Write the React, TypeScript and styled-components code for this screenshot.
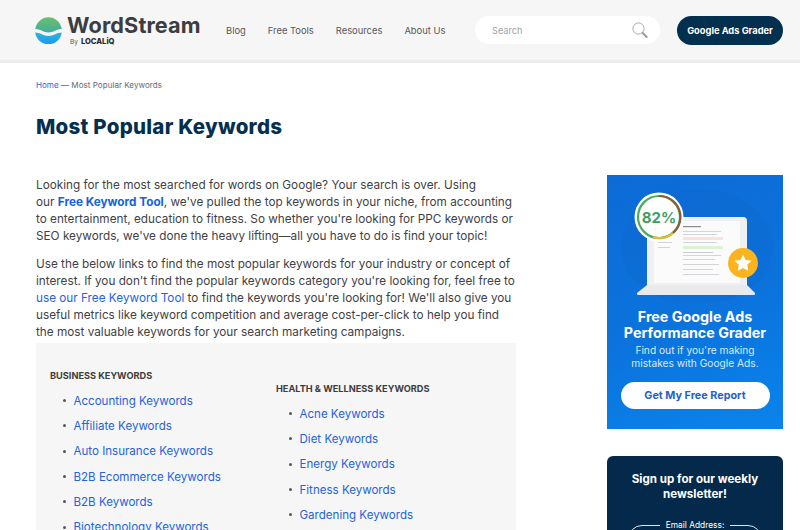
import styled, { createGlobalStyle } from "styled-components";

const GlobalStyle = createGlobalStyle`
  html, body {
    margin: 0;
    padding: 0;
    height: 530px;
    overflow: hidden;
    background: #fff;
    font-family: "Inter", "Liberation Sans", sans-serif;
  }
  * { box-sizing: border-box; }
`;

const Page = styled.div`
  width: 800px;
  height: 530px;
  overflow: hidden;
`;

const Header = styled.header`
  height: 63px;
  display: flex;
  align-items: center;
  padding: 0 17px 0 35px;
  background: #f6f6f7;
  border-bottom: 3px solid #ececec;
`;

const Logo = styled.div`
  display: flex;
  align-items: center;
  gap: 5px;
  width: 191px;
`;

const LogoWords = styled.div`
  display: flex;
  flex-direction: column;
`;

const LogoName = styled.span`
  font-size: 21.7px;
  line-height: 23px;
  font-weight: 700;
  color: #3c3d40;
  letter-spacing: 0.1px;
`;

const LogoBy = styled.span`
  font-size: 6.5px;
  line-height: 9px;
  margin-left: 3px;
  color: #55565a;
  b {
    font-size: 7.6px;
    font-weight: 800;
    color: #2b2c2f;
    margin-left: 3px;
  }
`;

const Nav = styled.nav`
  display: flex;
  gap: 22px;
  width: 249px;
`;

const NavLink = styled.a`
  font-size: 9.4px;
  color: #55565a;
  white-space: nowrap;
`;

const SearchBox = styled.div`
  width: 185px;
  height: 28px;
  border-radius: 14px;
  background: #fff;
  display: flex;
  align-items: center;
  justify-content: space-between;
  padding: 0 12px 0 17px;
  font-size: 9.2px;
  color: #a2a3a7;
`;

const GraderButton = styled.a`
  margin-left: 17px;
  width: 106px;
  height: 29px;
  border-radius: 15px;
  background: #04304f;
  color: #fff;
  font-size: 9.3px;
  font-weight: 700;
  display: flex;
  align-items: center;
  justify-content: center;
  white-space: nowrap;
`;

const Main = styled.main`
  display: grid;
  grid-template-columns: 480px 176px;
  column-gap: 91px;
  padding: 0 0 0 36px;
`;

const Crumbs = styled.div`
  grid-column: 1 / 3;
  margin-top: 16px;
  font-size: 8.1px;
  line-height: 12px;
  color: #666a72;
  a { color: #2f66d6; }
`;

const Title = styled.h1`
  grid-column: 1 / 3;
  margin: 24px 0 38px;
  font-size: 20.5px;
  line-height: 24px;
  font-weight: 800;
  color: #04304f;
  letter-spacing: 0.25px;
`;

const Article = styled.article`
  min-width: 0;
`;

const Para = styled.p`
  margin: 0 0 11px;
  font-size: 11.75px;
  line-height: 17px;
  color: #3f4145;
  white-space: nowrap;
`;

const StrongLink = styled.a`
  color: #1463d8;
  font-weight: 700;
`;

const PlainLink = styled.a`
  color: #2563d9;
`;

const KeywordPanel = styled.section`
  margin-top: -9px;
  height: 190px;
  background: #f6f6f7;
  padding: 27px 14px 0;
  display: grid;
  grid-template-columns: 226px 1fr;
  overflow: hidden;
`;

const KeywordColumn = styled.div<{ $drop?: number }>`
  padding-top: ${(p) => p.$drop ?? 0}px;
`;

const ColumnHead = styled.h4`
  margin: 0 0 6px;
  font-size: 9.2px;
  line-height: 12px;
  font-weight: 700;
  color: #3f3d3c;
  white-space: nowrap;
`;

const KeywordList = styled.ul`
  list-style: none;
  margin: 0;
  padding: 0 0 0 12.5px;
`;

const KeywordItem = styled.li`
  display: flex;
  align-items: center;
  gap: 8px;
  height: 25.3px;
  font-size: 11.55px;
  color: #2563d9;
  white-space: nowrap;
  &::before {
    content: "";
    width: 3px;
    height: 3px;
    border-radius: 50%;
    background: #55565a;
  }
`;

const Sidebar = styled.aside`
  margin-top: -2px;
  display: flex;
  flex-direction: column;
  gap: 27px;
`;

const PromoCard = styled.div`
  height: 254px;
  padding-top: 10px;
  background: linear-gradient(160deg, #0d6bd6 0%, #0b73dd 55%, #0a84ec 100%);
  display: flex;
  flex-direction: column;
  align-items: center;
  color: #fff;
  text-align: center;
`;

const PromoArt = styled.svg`
  display: block;
  width: 176px;
  height: 118px;
`;

const PromoTitle = styled.div`
  margin-top: 6px;
  font-size: 14.3px;
  line-height: 15.5px;
  font-weight: 700;
  white-space: nowrap;
`;

const PromoText = styled.div`
  margin-top: 4px;
  font-size: 10.2px;
  line-height: 13px;
  color: #d9ebfb;
  white-space: nowrap;
`;

const PromoButton = styled.a`
  margin-top: 12px;
  width: 149px;
  height: 27px;
  border-radius: 14px;
  background: #fff;
  color: #1f62c9;
  font-size: 10.8px;
  font-weight: 700;
  display: flex;
  align-items: center;
  justify-content: center;
`;

const NewsCard = styled.div`
  height: 120px;
  border-radius: 6px;
  background: #04294a;
  padding: 16px 21px 0;
  color: #fff;
  text-align: center;
`;

const NewsTitle = styled.div`
  font-size: 11.6px;
  line-height: 15px;
  font-weight: 700;
  white-space: nowrap;
`;

const EmailField = styled.fieldset`
  margin: 18px 0 0;
  padding: 0;
  height: 40px;
  border: 1px solid #dfe6ec;
  border-radius: 14px;
`;

const EmailLegend = styled.legend`
  padding: 0 6px;
  font-size: 8.4px;
  line-height: 11px;
  color: #fff;
`;

const keywords = {
  business: [
    "Accounting Keywords",
    "Affiliate Keywords",
    "Auto Insurance Keywords",
    "B2B Ecommerce Keywords",
    "B2B Keywords",
    "Biotechnology Keywords",
  ],
  health: [
    "Acne Keywords",
    "Diet Keywords",
    "Energy Keywords",
    "Fitness Keywords",
    "Gardening Keywords",
    "Health Keywords",
  ],
};

function LogoMark() {
  return (
    <svg width="27" height="27" viewBox="0 0 27 27">
      <defs>
        <linearGradient id="top" x1="0" y1="0" x2="0" y2="1">
          <stop offset="0" stopColor="#6cbf6b" />
          <stop offset="1" stopColor="#3fae9c" />
        </linearGradient>
        <linearGradient id="bottom" x1="0" y1="0" x2="0" y2="1">
          <stop offset="0" stopColor="#2cb6d8" />
          <stop offset="1" stopColor="#1f97f2" />
        </linearGradient>
      </defs>
      <path d="M0.3 12A13.3 13.3 0 0 1 26.7 12C22 12 18 15.5 13.5 15.5S5 12 .3 12Z" fill="url(#top)" />
      <path d="M.2 15.5C5 15.5 9 19 13.5 19S22 15.5 26.8 15.5A13.4 13.4 0 0 1 .2 15.5Z" fill="url(#bottom)" />
    </svg>
  );
}

function SearchIcon() {
  return (
    <svg width="16" height="17" viewBox="0 0 16 17" fill="none">
      <circle cx="6.5" cy="6.5" r="5.6" stroke="#a9aaad" strokeWidth="1" />
      <path d="M10.8 11 14.6 15" stroke="#9a9b9e" strokeWidth="2" strokeLinecap="round" />
    </svg>
  );
}

function GraderArt() {
  return (
    <PromoArt viewBox="0 0 176 118">
      <ellipse cx="90" cy="62" rx="76" ry="58" fill="#0f62c8" opacity="0.25" />
      <path d="M40 36a4 4 0 0 1 4-4h92a4 4 0 0 1 4 4v65H40Z" fill="#eef0f1" />
      <rect x="47" y="36" width="86" height="62" fill="#fbfbfb" />
      <rect x="76" y="41" width="18" height="1.2" fill="#8a8d90" />
      <rect x="76" y="46" width="38" height="1" fill="#d3d5d8" />
      <rect x="76" y="49" width="34" height="1" fill="#d3d5d8" />
      <rect x="76" y="52" width="40" height="3" fill="#f9e2de" />
      <rect x="76" y="57" width="34" height="1" fill="#d3d5d8" />
      <rect x="76" y="61" width="40" height="3" fill="#dcf2d6" />
      <rect x="76" y="67" width="30" height="1" fill="#c9cbce" />
      <rect x="76" y="70" width="38" height="1" fill="#d3d5d8" />
      <rect x="76" y="74" width="32" height="1" fill="#d3d5d8" />
      <rect x="76" y="79" width="36" height="1" fill="#d3d5d8" />
      <rect x="76" y="84" width="30" height="1" fill="#d3d5d8" />
      <rect x="76" y="89" width="36" height="1" fill="#d3d5d8" />
      <rect x="51" y="57" width="14" height="1" fill="#d3d5d8" />
      <rect x="51" y="62" width="12" height="1" fill="#d3d5d8" />
      <path d="M30 108 40 100H140L148 108a1.500 1.500 0 0 1-1.500 2H31.500a1.500 1.500 0 0 1-1.500-2Z" fill="#e9eaec" />
      <circle cx="52" cy="32" r="24.500" fill="#fff" />
      <circle cx="52" cy="32" r="21" fill="none" stroke="#4cab62" strokeWidth="2.200" />
      <path d="M52 11A21 21 0 0 1 66 48" fill="none" stroke="#8a5a3c" strokeWidth="2.200" />
      <path d="M66 48A21 21 0 0 1 46 52" fill="none" stroke="#f5b81f" strokeWidth="2.200" />
      <text x="52" y="38" textAnchor="middle" fontSize="15" fontWeight="700" fill="#3f9e5f" fontFamily="Inter, sans-serif">
        82%
      </text>
      <circle cx="136" cy="78" r="15" fill="#fbb41e" />
      <path d="M136 69.500l2.600 5.400 5.900.8-4.300 4.100 1 5.900-5.200-2.800-5.200 2.800 1-5.900-4.300-4.100 5.900-.8Z" fill="#fff" />
    </PromoArt>
  );
}

export default function App() {
  return (
    <Page>
      <GlobalStyle />
      <Header>
        <Logo>
          <LogoMark />
          <LogoWords>
            <LogoName>WordStream</LogoName>
            <LogoBy>
              By<b>LOCALiQ</b>
            </LogoBy>
          </LogoWords>
        </Logo>
        <Nav>
          <NavLink>Blog</NavLink>
          <NavLink>Free Tools</NavLink>
          <NavLink>Resources</NavLink>
          <NavLink>About Us</NavLink>
        </Nav>
        <SearchBox>
          Search
          <SearchIcon />
        </SearchBox>
        <GraderButton>Google Ads Grader</GraderButton>
      </Header>
      <Main>
        <Crumbs>
          <a>Home</a> — Most Popular Keywords
        </Crumbs>
        <Title>Most Popular Keywords</Title>
        <Article>
          <Para>
            Looking for the most searched for words on Google? Your search is over. Using
            <br />
            our <StrongLink>Free Keyword Tool</StrongLink>, we've pulled the top keywords in your niche, from accounting
            <br />
            to entertainment, education to fitness. So whether you're looking for PPC keywords or
            <br />
            SEO keywords, we've done the heavy lifting—all you have to do is find your topic!
          </Para>
          <Para>
            Use the below links to find the most popular keywords for your industry or concept of
            <br />
            interest. If you don't find the popular keywords category you're looking for, feel free to
            <br />
            <PlainLink>use our Free Keyword Tool</PlainLink> to find the keywords you're looking for! We'll also give you
            <br />
            useful metrics like keyword competition and average cost-per-click to help you find
            <br />
            the most valuable keywords for your search marketing campaigns.
          </Para>
          <KeywordPanel>
            <KeywordColumn>
              <ColumnHead>BUSINESS KEYWORDS</ColumnHead>
              <KeywordList>
                {keywords.business.map((k) => (
                  <KeywordItem key={k}>{k}</KeywordItem>
                ))}
              </KeywordList>
            </KeywordColumn>
            <KeywordColumn $drop={13}>
              <ColumnHead>HEALTH &amp; WELLNESS KEYWORDS</ColumnHead>
              <KeywordList>
                {keywords.health.map((k) => (
                  <KeywordItem key={k}>{k}</KeywordItem>
                ))}
              </KeywordList>
            </KeywordColumn>
          </KeywordPanel>
        </Article>
        <Sidebar>
          <PromoCard>
            <GraderArt />
            <PromoTitle>
              Free Google Ads
              <br />
              Performance Grader
            </PromoTitle>
            <PromoText>
              Find out if you're making
              <br />
              mistakes with Google Ads.
            </PromoText>
            <PromoButton>Get My Free Report</PromoButton>
          </PromoCard>
          <NewsCard>
            <NewsTitle>
              Sign up for our weekly
              <br />
              newsletter!
            </NewsTitle>
            <EmailField>
              <EmailLegend>Email Address:</EmailLegend>
            </EmailField>
          </NewsCard>
        </Sidebar>
      </Main>
    </Page>
  );
}
